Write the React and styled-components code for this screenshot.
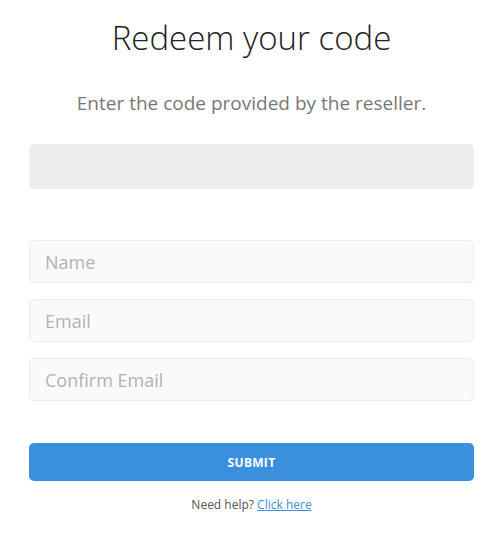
import styled, { createGlobalStyle } from "styled-components";

const GlobalStyle = createGlobalStyle`
    html, body {
        margin: 0;
        padding: 0;
        background: #ffffff;
        font-family: "Open Sans", "Liberation Sans", sans-serif;
    }
`;

const App = () => {
    return (
        <>
            <GlobalStyle />
            <Container>
                <Title>Redeem your code</Title>
                <Subtitle>Enter the code provided by the reseller.</Subtitle>
                <CodeInput type="text" />
                <Fields>
                    <Field type="text" placeholder="Name" />
                    <Field type="email" placeholder="Email" />
                    <Field type="email" placeholder="Confirm Email" />
                </Fields>
                <Submit>SUBMIT</Submit>
                <Help>
                    Need help? <a href="#">Click here</a>
                </Help>
            </Container>
        </>
    );
};

const Container = styled.div`
    display: flex;
    flex-direction: column;
    padding: 0 25px 0 29px;
`;

const Title = styled.h1`
    margin: 16px 0 0;
    font-size: 33px;
    font-weight: 300;
    line-height: 44px;
    color: #222;
    text-align: center;
`;

const Subtitle = styled.p`
    margin: 30px 0 0;
    font-size: 19px;
    font-weight: 400;
    line-height: 26px;
    color: #777;
    text-align: center;
`;

const CodeInput = styled.input`
    box-sizing: border-box;
    margin-top: 28px;
    height: 45px;
    border: none;
    border-radius: 5px;
    background: #eeeeee;
    outline: none;
`;

const Fields = styled.div`
    display: flex;
    flex-direction: column;
    gap: 16px;
    margin-top: 51px;
`;

const Field = styled.input`
    box-sizing: border-box;
    height: 43px;
    padding: 0 15px;
    border: 1px solid #ececec;
    border-radius: 5px;
    background: #fafafa;
    font-family: "Open Sans", "Liberation Sans", sans-serif;
    font-size: 18px;
    color: #333;
    outline: none;

    &::placeholder {
        color: #b8b0ad;
    }
`;

const Submit = styled.button`
    margin-top: 42px;
    height: 38px;
    border: none;
    border-radius: 5px;
    background: #3b90de;
    color: #ffffff;
    font-family: "Open Sans", "Liberation Sans", sans-serif;
    font-size: 12px;
    font-weight: 700;
    letter-spacing: 0.3px;
    cursor: pointer;
`;

const Help = styled.p`
    margin: 16px 0 0;
    font-size: 12px;
    line-height: 16px;
    color: #555;
    text-align: center;

    a {
        color: #3b90de;
        text-decoration: underline;
    }
`;

export default App;
